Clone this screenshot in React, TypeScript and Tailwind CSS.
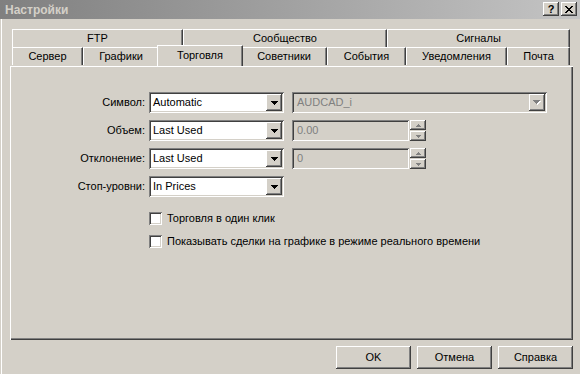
import React from "react";

const RAISED =
  "shadow-[inset_-1px_-1px_0_#404040,inset_1px_1px_0_#ffffff,inset_-2px_-2px_0_#808080]";
const SUNKEN =
  "shadow-[inset_1px_1px_0_#808080,inset_-1px_-1px_0_#ffffff,inset_2px_2px_0_#404040,inset_-2px_-2px_0_#d4d0c8]";

function DownArrow({ disabled }: { disabled?: boolean }) {
  if (disabled) {
    return (
      <svg width="8" height="5" viewBox="0 0 8 5" shapeRendering="crispEdges">
        <rect x="1" y="1" width="7" height="1" fill="#ffffff" />
        <rect x="2" y="2" width="5" height="1" fill="#ffffff" />
        <rect x="3" y="3" width="3" height="1" fill="#ffffff" />
        <rect x="4" y="4" width="1" height="1" fill="#ffffff" />
        <rect x="0" y="0" width="7" height="1" fill="#808080" />
        <rect x="1" y="1" width="5" height="1" fill="#808080" />
        <rect x="2" y="2" width="3" height="1" fill="#808080" />
        <rect x="3" y="3" width="1" height="1" fill="#808080" />
      </svg>
    );
  }
  return (
    <svg width="7" height="4" viewBox="0 0 7 4" shapeRendering="crispEdges">
      <rect x="0" y="0" width="7" height="1" fill="#000" />
      <rect x="1" y="1" width="5" height="1" fill="#000" />
      <rect x="2" y="2" width="3" height="1" fill="#000" />
      <rect x="3" y="3" width="1" height="1" fill="#000" />
    </svg>
  );
}

function SpinArrow({ up }: { up?: boolean }) {
  return (
    <svg width="5" height="3" viewBox="0 0 5 3" shapeRendering="crispEdges">
      {up ? (
        <>
          <rect x="2" y="0" width="1" height="1" fill="#808080" />
          <rect x="1" y="1" width="3" height="1" fill="#808080" />
          <rect x="0" y="2" width="5" height="1" fill="#808080" />
        </>
      ) : (
        <>
          <rect x="0" y="0" width="5" height="1" fill="#808080" />
          <rect x="1" y="1" width="3" height="1" fill="#808080" />
          <rect x="2" y="2" width="1" height="1" fill="#808080" />
        </>
      )}
    </svg>
  );
}

function Tab({ label, className }: { label: string; className: string }) {
  return (
    <div
      className={
        "h-[18px] flex items-center justify-center border-t border-l border-white border-r border-r-[#404040] shadow-[inset_-1px_0_0_#808080] bg-[#d4d0c8] " +
        className
      }
    >
      {label}
    </div>
  );
}

function Combo({
  text,
  className,
  disabled,
}: {
  text: string;
  className: string;
  disabled?: boolean;
}) {
  return (
    <div
      className={
        "h-[21px] flex items-center p-[2px] " +
        SUNKEN +
        " " +
        (disabled ? "bg-[#d4d0c8] text-[#808080]" : "bg-white text-black") +
        " " +
        className
      }
    >
      <span className={disabled ? "flex-1 pl-[3px]" : "flex-1 pl-[2px]"}>{text}</span>
      <div
        className={
          "w-[16px] h-[17px] bg-[#d4d0c8] flex items-center justify-center " + RAISED
        }
      >
        <DownArrow disabled={disabled} />
      </div>
    </div>
  );
}

function Spin({ value }: { value: string }) {
  return (
    <div className="flex">
      <div
        className={
          "w-[117px] h-[21px] flex items-center pl-[5px] bg-[#d4d0c8] text-[#808080] " +
          SUNKEN
        }
      >
        {value}
      </div>
      <div className="ml-[1px] w-[16px] h-[21px] flex flex-col gap-[1px]">
        <div className={"h-[10px] bg-[#d4d0c8] flex items-center justify-center " + RAISED}>
          <SpinArrow up />
        </div>
        <div className={"h-[10px] bg-[#d4d0c8] flex items-center justify-center " + RAISED}>
          <SpinArrow />
        </div>
      </div>
    </div>
  );
}

function Row({
  label,
  combo,
  right,
}: {
  label: string;
  combo: string;
  right?: React.ReactNode;
}) {
  return (
    <div className="flex items-center h-[21px]">
      <div className="w-[135px] text-right">{label}</div>
      <Combo text={combo} className="ml-[4px] w-[135px]" />
      {right ? <div className="ml-[8px]">{right}</div> : null}
    </div>
  );
}

function Check({ label, className }: { label: string; className: string }) {
  return (
    <div className={"flex items-center pl-[139px] h-[13px] " + className}>
      <div className={"w-[13px] h-[13px] bg-white " + SUNKEN} />
      <span className="ml-[5px]">{label}</span>
    </div>
  );
}

function DlgButton({ label }: { label: string }) {
  return (
    <div
      className={
        "w-[75px] h-[23px] flex items-center justify-center bg-[#d4d0c8] " + RAISED
      }
    >
      {label}
    </div>
  );
}

export default function App() {
  return (
    <div className="w-[580px] h-[374px] bg-[#d4d0c8] font-['Liberation_Sans',Arial,sans-serif] text-[11px] leading-[13px] text-black overflow-hidden">
      {/* Title bar */}
      <div className="h-[19px] flex items-start justify-between bg-linear-to-r from-[#808080] to-[#c4c4c4] pr-[3px]">
        <div className="pl-[5px] pt-[3px] text-[12px] leading-[14px] font-bold text-[#d4d0c8]">
          Настройки
        </div>
        <div className="flex gap-[2px] pt-[2px]">
          <div
            className={
              "w-[16px] h-[14px] bg-[#d4d0c8] flex items-center justify-center font-bold text-[11px] leading-[11px] " +
              RAISED
            }
          >
            ?
          </div>
          <div
            className={"w-[16px] h-[14px] bg-[#d4d0c8] flex items-center justify-center " + RAISED}
          >
            <svg width="8" height="7" viewBox="0 0 8 7" shapeRendering="crispEdges">
              <rect x="0" y="0" width="2" height="1" fill="#000" />
              <rect x="6" y="0" width="2" height="1" fill="#000" />
              <rect x="1" y="1" width="2" height="1" fill="#000" />
              <rect x="5" y="1" width="2" height="1" fill="#000" />
              <rect x="2" y="2" width="4" height="1" fill="#000" />
              <rect x="3" y="3" width="2" height="1" fill="#000" />
              <rect x="2" y="4" width="4" height="1" fill="#000" />
              <rect x="1" y="5" width="2" height="1" fill="#000" />
              <rect x="5" y="5" width="2" height="1" fill="#000" />
              <rect x="0" y="6" width="2" height="1" fill="#000" />
              <rect x="6" y="6" width="2" height="1" fill="#000" />
            </svg>
          </div>
        </div>
      </div>

      {/* Body */}
      <div className="ml-[1px] border-l border-white h-[355px]">
        <div className="pt-[10px] pl-[10px]">
          <div className="flex">
            <Tab label="FTP" className="w-[171px]" />
            <Tab label="Сообщество" className="w-[204px]" />
            <Tab label="Сигналы" className="w-[183px]" />
          </div>
          <div className="flex">
            <Tab label="Сервер" className="w-[71px]" />
            <Tab label="Графики" className="w-[76px]" />
            <div className="relative z-10 -mt-[2px] -mx-[2px] w-[86px] h-[21px] flex justify-center pt-[3px] bg-[#d4d0c8] border-t border-l border-white border-r border-r-[#404040] shadow-[inset_-1px_0_0_#808080]">
              Торговля
            </div>
            <Tab label="Советники" className="w-[86px]" />
            <Tab label="События" className="w-[79px]" />
            <Tab label="Уведомления" className="w-[101px]" />
            <Tab label="Почта" className="w-[63px]" />
          </div>
        </div>

        {/* Panel */}
        <div className="ml-[8px] w-[563px] h-[274px] shadow-[inset_1px_1px_0_#ffffff,inset_-1px_-1px_0_#404040,inset_-2px_-2px_0_#808080] pt-[26px] flex flex-col">
          <div className="flex flex-col gap-[7px]">
            <Row
              label="Символ:"
              combo="Automatic"
              right={<Combo text="AUDCAD_i" className="w-[255px]" disabled />}
            />
            <Row label="Объем:" combo="Last Used" right={<Spin value="0.00" />} />
            <Row label="Отклонение:" combo="Last Used" right={<Spin value="0" />} />
            <Row label="Стоп-уровни:" combo="In Prices" />
          </div>
          <Check label="Торговля в один клик" className="mt-[15px]" />
          <Check
            label="Показывать сделки на графике в режиме реального времени"
            className="mt-[10px]"
          />
        </div>

        {/* Buttons */}
        <div className="flex gap-[6px] ml-[334px] mt-[6px]">
          <DlgButton label="OK" />
          <DlgButton label="Отмена" />
          <DlgButton label="Справка" />
        </div>
      </div>
    </div>
  );
}
